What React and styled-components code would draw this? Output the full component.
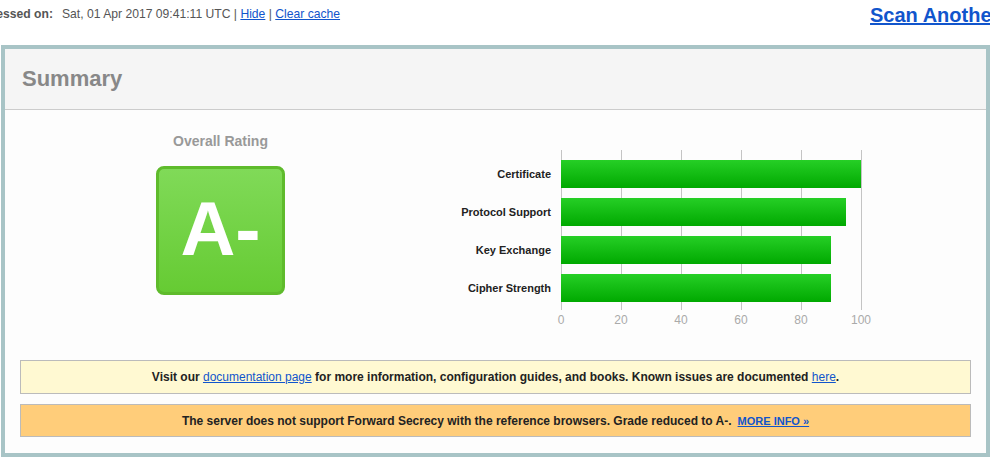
import styled, { createGlobalStyle } from "styled-components";

const GlobalStyle = createGlobalStyle`
  body {
    margin: 0;
    background: #fff;
    font-family: "Liberation Sans", Arial, sans-serif;
    overflow: hidden;
  }
`;

const scores = [
  { label: "Certificate", value: 100 },
  { label: "Protocol Support", value: 95 },
  { label: "Key Exchange", value: 90 },
  { label: "Cipher Strength", value: 90 },
];

const ticks = [0, 20, 40, 60, 80, 100];

const App = () => {
  return (
    <Page>
      <GlobalStyle />
      <TopBar>
        <Assessed>
          <b>Assessed on:</b>
          <span>Sat, 01 Apr 2017 09:41:11 UTC</span> | <a href="#">Hide</a> |{" "}
          <a href="#">Clear cache</a>
        </Assessed>
        <ScanLink href="#">Scan Another &raquo;</ScanLink>
      </TopBar>

      <SummaryBox>
        <SummaryHeader>Summary</SummaryHeader>
        <SummaryBody>
          <TopRow>
            <RatingColumn>
              <RatingTitle>Overall Rating</RatingTitle>
              <Grade>A-</Grade>
            </RatingColumn>

            <Chart>
              <Labels>
                {scores.map((s) => (
                  <Label key={s.label}>{s.label}</Label>
                ))}
              </Labels>
              <PlotColumn>
                <Plot>
                  {scores.map((s) => (
                    <Bar key={s.label} style={{ width: s.value * 3 }} />
                  ))}
                </Plot>
                <Axis>
                  {ticks.map((t) => (
                    <Tick key={t}>{t}</Tick>
                  ))}
                </Axis>
              </PlotColumn>
            </Chart>
          </TopRow>

          <Notices>
            <Notice>
              Visit our <a href="#">documentation page</a> for more information,
              configuration guides, and books. Known issues are documented{" "}
              <a href="#">here</a>.
            </Notice>
            <Notice $warning>
              The server does not support Forward Secrecy with the reference
              browsers. Grade reduced to A-.
              <MoreInfo href="#">MORE INFO &raquo;</MoreInfo>
            </Notice>
          </Notices>
        </SummaryBody>
      </SummaryBox>
    </Page>
  );
};

const Page = styled.div`
  width: 989px;
  margin-left: 1px;
`;

const TopBar = styled.div`
  display: flex;
  height: 45px;

  a {
    color: #1155cc;
  }
`;

const Assessed = styled.div`
  margin-top: 6px;
  margin-left: -27px;
  font-size: 12.15px;
  line-height: 16px;
  color: #555;
  white-space: nowrap;

  b {
    margin-right: 9px;
  }
`;

const ScanLink = styled.a`
  margin-top: 3px;
  margin-left: auto;
  margin-right: -26px;
  font-size: 20px;
  line-height: 24px;
  font-weight: 700;
  white-space: nowrap;
`;

const SummaryBox = styled.div`
  border: 4px solid #a8c4c6;
  background: #fdfdfd;
`;

const SummaryHeader = styled.div`
  height: 61px;
  display: flex;
  align-items: center;
  padding-left: 17px;
  box-sizing: border-box;
  background: #f5f5f5;
  border-bottom: 1px solid #cccccc;
  font-size: 22px;
  font-weight: 700;
  color: #888;
`;

const SummaryBody = styled.div`
  padding: 23px 15px 16px;
`;

const TopRow = styled.div`
  display: flex;
`;

const RatingColumn = styled.div`
  width: 401px;
  display: flex;
  flex-direction: column;
  align-items: center;
`;

const RatingTitle = styled.div`
  font-size: 14px;
  line-height: 16px;
  font-weight: 700;
  color: #999;
`;

const Grade = styled.div`
  margin-top: 17px;
  width: 129px;
  height: 129px;
  box-sizing: border-box;
  border: 3px solid #5fbb2c;
  border-radius: 8px;
  background: linear-gradient(#80da58, #66cb33);
  display: flex;
  align-items: center;
  justify-content: center;
  color: #fff;
  font-size: 76px;
  font-weight: 700;
  line-height: 1;
  padding-bottom: 4px;
`;

const Chart = styled.div`
  display: flex;
  padding-top: 17px;
  margin-left: 4px;
`;

const Labels = styled.div`
  width: 126px;
  padding: 10px 10px 0 0;
  display: flex;
  flex-direction: column;
  gap: 10px;
`;

const Label = styled.div`
  height: 28px;
  display: flex;
  align-items: center;
  justify-content: flex-end;
  font-size: 11px;
  font-weight: 700;
  color: #222;
  white-space: nowrap;
`;

const PlotColumn = styled.div`
  display: flex;
  flex-direction: column;
`;

const Plot = styled.div`
  width: 301px;
  height: 160px;
  box-sizing: border-box;
  padding-top: 10px;
  display: flex;
  flex-direction: column;
  gap: 10px;
  background: repeating-linear-gradient(
    to right,
    #c4c4c4 0,
    #c4c4c4 1px,
    transparent 1px,
    transparent 60px
  );
`;

const Bar = styled.div`
  height: 28px;
  background: linear-gradient(#26cf26, #00a900);
`;

const Axis = styled.div`
  display: flex;
  margin-left: -30px;
  margin-top: 3px;
`;

const Tick = styled.div`
  width: 60px;
  text-align: center;
  font-size: 12px;
  line-height: 14px;
  color: #aaa;
`;

const Notices = styled.div`
  margin-top: 33px;
  display: flex;
  flex-direction: column;
  gap: 10px;
`;

const Notice = styled.div`
  border: 1px solid #bbbbbb;
  background: ${(p) => (p.$warning ? "#ffcd7a" : "#fff9d2")};
  padding: ${(p) => (p.$warning ? "8px 10px 7px" : "8px 10px")};
  text-align: center;
  font-size: 12px;
  line-height: 16px;
  font-weight: 700;
  color: #222;

  a {
    color: #1155cc;
    font-weight: 400;
  }
`;

const MoreInfo = styled.a`
  margin-left: 6px;
  font-size: 11px;
  text-transform: uppercase;

  && {
    font-weight: 700;
  }
`;

export default App;
